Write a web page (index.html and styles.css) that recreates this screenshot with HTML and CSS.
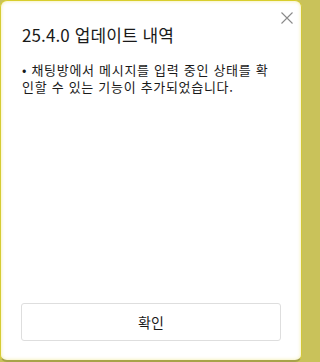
FILE: index.html
```html
<!DOCTYPE html>
<html lang="ko">
<head>
<meta charset="utf-8">
<link rel="stylesheet" href="styles.css">
</head>
<body>
<div class="dialog">
  <button class="close" aria-label="닫기">
    <svg width="12" height="12" viewBox="0 0 12 12"><path d="M0.5 0.5L11.5 11.5M11.5 0.5L0.5 11.5" stroke="#8a8a8a" stroke-width="1.1" fill="none"/></svg>
  </button>
  <h1 class="title">25.4.0 업데이트 내역</h1>
  <p class="notes">• 채팅방에서 메시지를 입력 중인 상태를 확인할 수 있는 기능이 추가되었습니다.</p>
  <div class="spacer"></div>
  <button class="ok">확인</button>
</div>
</body>
</html>
```
FILE: styles.css
```css
html, body {
  margin: 0;
  padding: 0;
  background: #c9c25a;
  overflow: hidden;
}
.dialog {
  box-sizing: border-box;
  width: 302px;
  height: 362px;
  background: #fff;
  border-radius: 7px;
  border-style: solid;
  border-width: 1px 1px 2px 1px;
  border-color: #d9ce2c #d2c73a #a7a348 #d6cc33;
  box-shadow: inset 0 0 3px 1px rgba(240, 232, 150, 0.55);
  display: flex;
  flex-direction: column;
  padding: 0 20px 19px 20px;
  position: relative;
  font-family: "Noto Sans CJK KR", "Noto Sans", sans-serif;
  color: #1a1a1a;
}
.close {
  position: absolute;
  top: 10px;
  right: 7px;
  width: 14px;
  height: 14px;
  padding: 0;
  border: 0;
  background: none;
  display: flex;
  align-items: center;
  justify-content: center;
}
.title {
  margin: 22px 0 0 1px;
  font-size: 17px;
  font-weight: 400;
  line-height: 24px;
  letter-spacing: 0.1px;
}
.notes {
  margin: 14px 0 0 1px;
  font-size: 13px;
  line-height: 17px;
  letter-spacing: 0.7px;
  word-break: break-all;
}
.spacer {
  flex: 1;
}
.ok {
  height: 38px;
  width: 260px;
  box-sizing: border-box;
  background: #fff;
  border: 1px solid #dedede;
  border-radius: 3px;
  font-family: "Noto Sans CJK KR", "Noto Sans", sans-serif;
  font-size: 14px;
  color: #1a1a1a;
  padding: 0;
}
```
